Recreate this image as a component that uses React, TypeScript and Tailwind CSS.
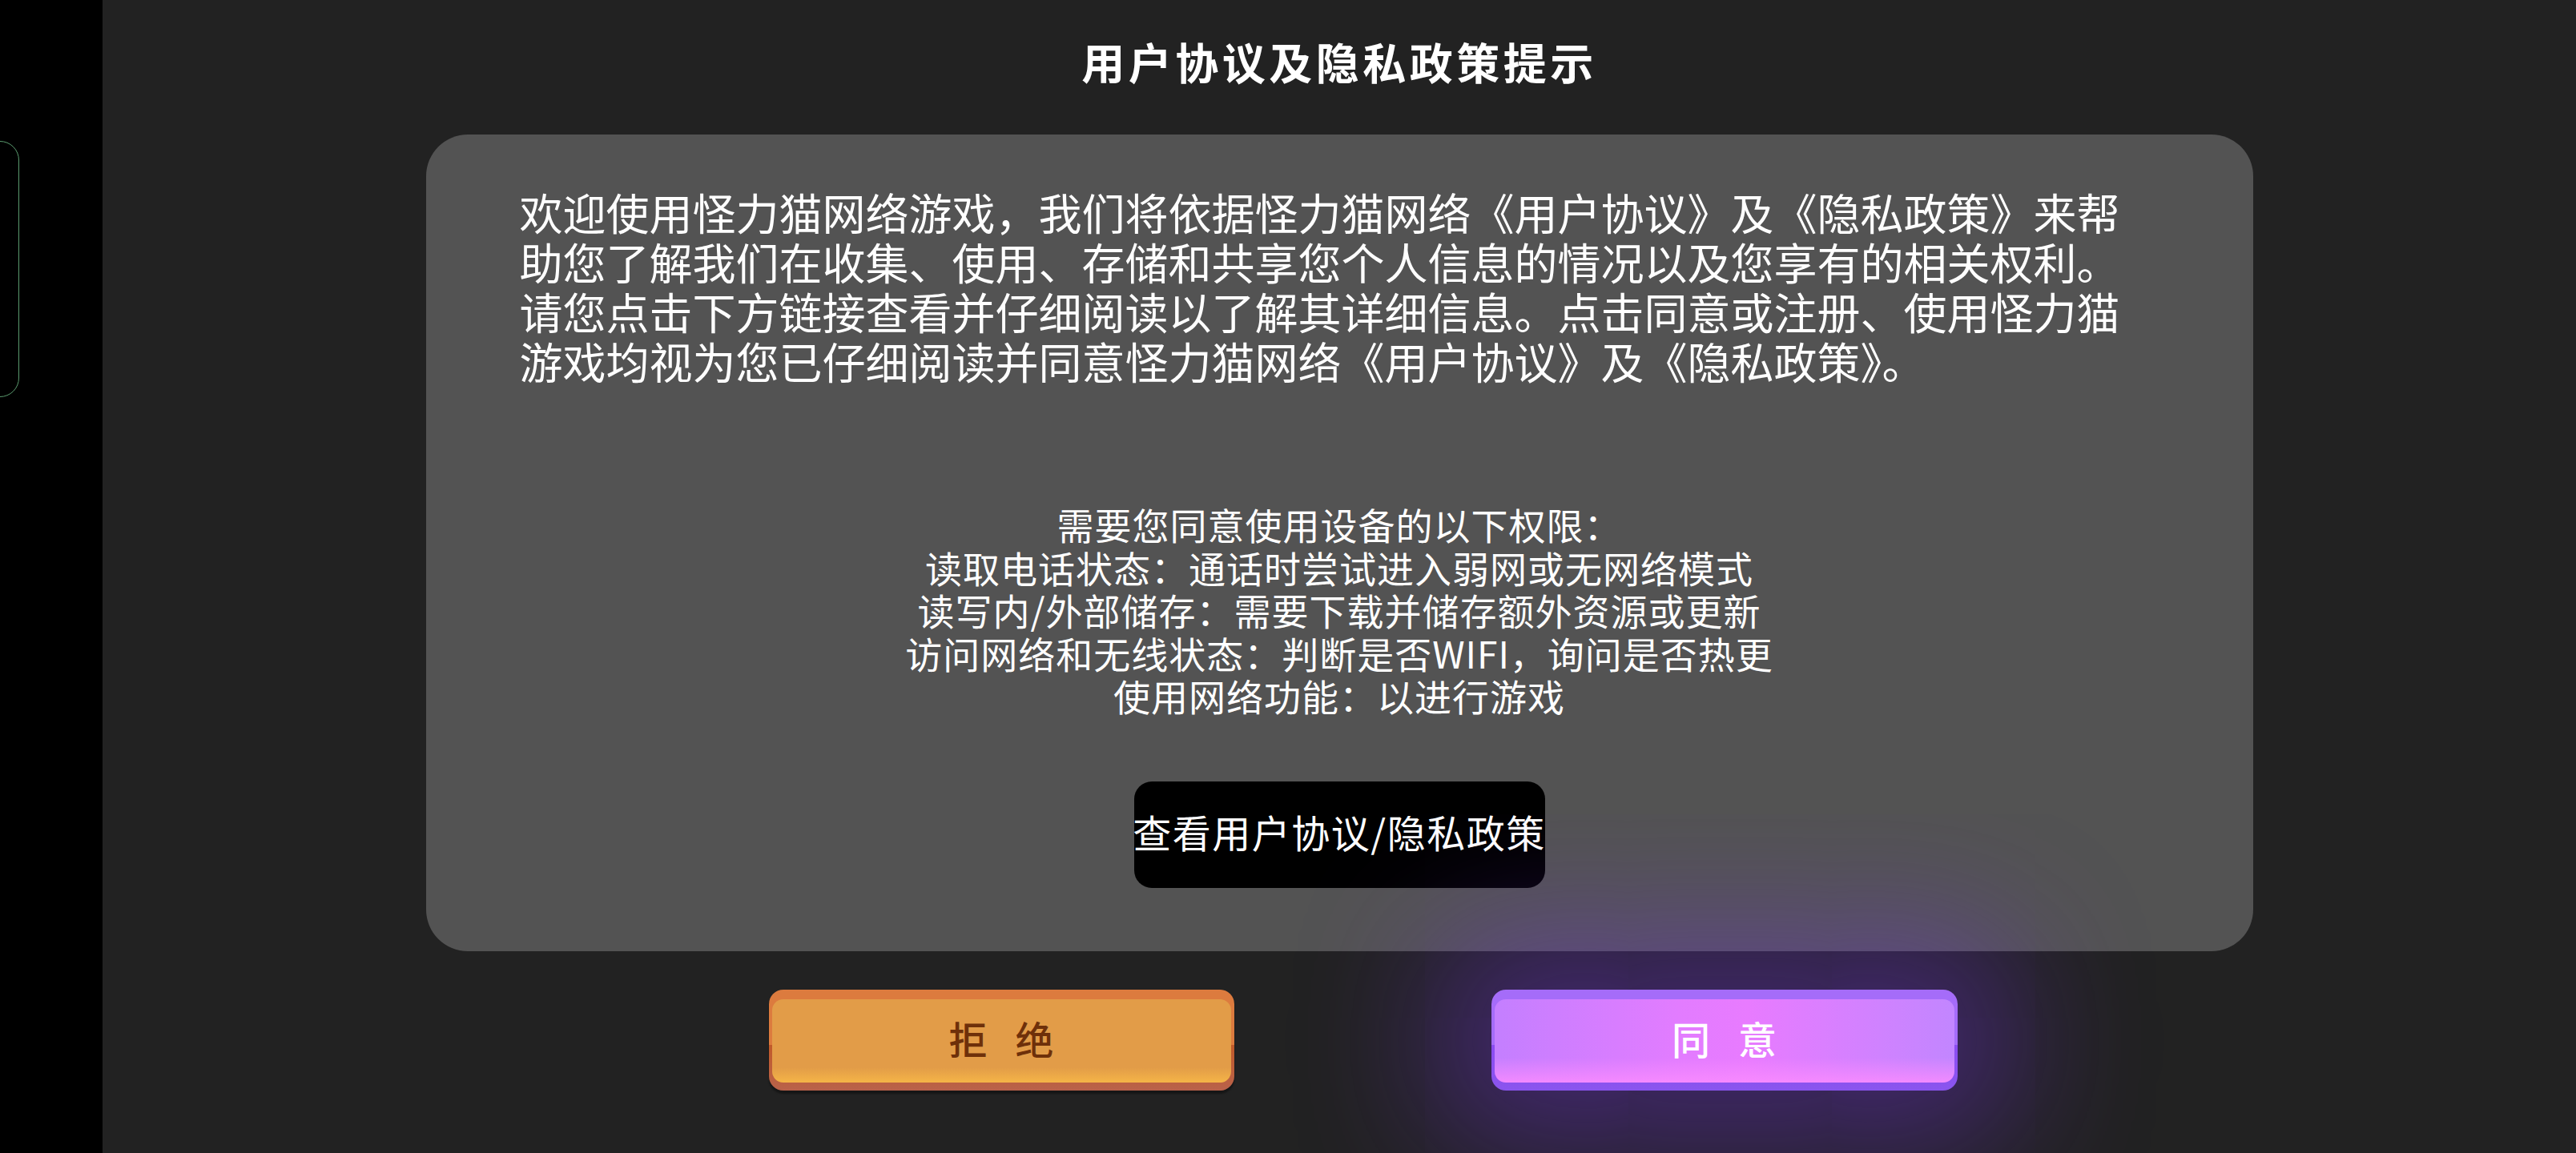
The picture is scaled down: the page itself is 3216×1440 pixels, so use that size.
import React from "react";

const cjk = { fontFamily: '"Noto Sans CJK SC", "Noto Sans", sans-serif' };

const permissions = [
  "需要您同意使用设备的以下权限：",
  "读取电话状态：通话时尝试进入弱网或无网络模式",
  "读写内/外部储存：需要下载并储存额外资源或更新",
  "访问网络和无线状态：判断是否WIFI，询问是否热更",
  "使用网络功能：以进行游戏",
];

function SideStrip() {
  return (
    <div className="relative w-[128px] h-[1440px] shrink-0 bg-black overflow-hidden">
      {/* edge handle peeking in from the left */}
      <div className="absolute left-[-40px] top-[176px] w-[64px] h-[320px] rounded-[24px] border-[1.5px] border-[#5a9a6e]" />
    </div>
  );
}

function RejectButton() {
  return (
    <button
      type="button"
      className="w-[581px] h-[126px] rounded-[18px] pt-[12px] pb-[10px] px-[4px] bg-[linear-gradient(to_bottom,#dc7b3e_0%,#dc7b3e_55%,#c15a2a_55%,#b9624a_100%)] shadow-[0_4px_2px_rgba(0,0,0,0.35)]"
    >
      <div className="w-full h-full rounded-[14px] flex items-center justify-center pb-[8px] bg-[linear-gradient(to_bottom,#e29c48_0%,#e29c48_82%,#f5b547_100%)]">
        <span
          className="text-[48px] leading-none tracking-[12px] pl-[12px] text-[#6e300a] font-medium"
          style={cjk}
        >
          拒 绝
        </span>
      </div>
    </button>
  );
}

function AgreeButton() {
  return (
    <button
      type="button"
      className="w-[582px] h-[126px] rounded-[18px] pt-[12px] pb-[10px] px-[4px] bg-[linear-gradient(to_bottom,#a56cf9_0%,#a56cf9_55%,#8b4cf1_55%,#8a55ee_100%)] shadow-[0_0_170px_70px_rgba(120,50,240,0.38)]"
    >
      <div className="w-full h-full rounded-[14px] flex items-center justify-center pb-[8px] bg-[linear-gradient(to_bottom,rgba(255,140,255,0)_70%,rgba(250,140,255,0.85)_100%),linear-gradient(to_right,#c47fff_0%,#e27cff_40%,#e87bff_55%,#c286ff_100%)]">
        <span
          className="text-[48px] leading-none tracking-[12px] pl-[12px] text-white font-medium"
          style={cjk}
        >
          同 意
        </span>
      </div>
    </button>
  );
}

export default function App() {
  return (
    <div className="flex w-[3216px] h-[1440px] overflow-hidden bg-[#222222]" style={cjk}>
      <SideStrip />

      <main className="flex-1 h-[1440px] flex flex-col items-center">
        <h1 className="mt-[50px] text-[54px] leading-[54px] font-bold tracking-[4.5px] text-white">
          用户协议及隐私政策提示
        </h1>

        <section className="mt-[64px] w-[2281px] h-[1020px] rounded-[52px] bg-[#535353] flex flex-col items-center pt-[66px]">
          <p className="self-start pl-[117px] text-[54px] leading-[62px] text-white whitespace-nowrap">
            欢迎使用怪力猫网络游戏，我们将依据怪力猫网络《用户协议》及《隐私政策》来帮
            <br />
            助您了解我们在收集、使用、存储和共享您个人信息的情况以及您享有的相关权利。
            <br />
            请您点击下方链接查看并仔细阅读以了解其详细信息。点击同意或注册、使用怪力猫
            <br />
            游戏均视为您已仔细阅读并同意怪力猫网络《用户协议》及《隐私政策》。
          </p>

          <div className="mt-[146px] flex flex-col items-center text-[46px] leading-[53.5px] tracking-[1px] text-white">
            {permissions.map((line) => (
              <div key={line} className="whitespace-nowrap">
                {line}
              </div>
            ))}
          </div>

          <button
            type="button"
            className="mt-[80px] w-[513px] h-[133px] rounded-[22px] bg-black flex items-center justify-center pb-[8px]"
          >
            <span className="text-[48px] leading-none tracking-[1.5px] text-white whitespace-nowrap">
              查看用户协议/隐私政策
            </span>
          </button>
        </section>

        <div className="mt-[48px] ml-[59px] flex gap-[321px]">
          <RejectButton />
          <AgreeButton />
        </div>
      </main>
    </div>
  );
}
